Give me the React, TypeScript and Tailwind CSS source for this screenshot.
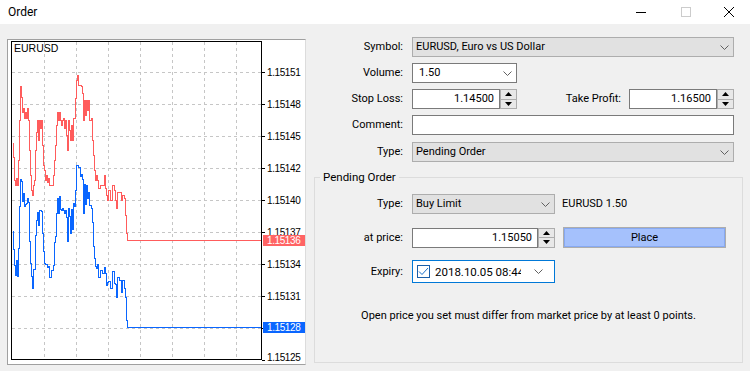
import React from 'react';

const RED: [number, number][] = [
  [12, 143], [13, 157], [14, 180], [15, 185], [16, 178], [17, 185], [18, 160], [19, 120], [20, 86], [21, 97],
  [22, 112], [23, 108], [24, 118], [25, 112], [26, 118], [27, 108], [28, 120], [29, 150], [30, 175], [31, 190],
  [32, 195], [33, 185], [34, 180], [35, 150], [36, 132], [37, 120], [38, 140], [39, 120], [40, 128], [41, 120],
  [42, 145], [43, 165], [44, 170], [45, 180], [46, 175], [47, 182], [48, 178], [49, 185], [51, 185], [53, 175],
  [54, 160], [55, 145], [56, 125], [57, 112], [58, 120], [59, 112], [60, 120], [61, 125], [62, 120], [63, 118],
  [64, 128], [65, 120], [66, 135], [67, 150], [68, 120], [69, 130], [70, 140], [71, 125], [72, 140], [73, 118],
  [74, 118], [75, 98], [76, 80], [77, 75], [78, 85], [80, 85], [81, 86], [82, 93], [83, 120], [84, 100],
  [85, 115], [86, 100], [87, 110], [88, 100], [89, 120], [91, 118], [92, 140], [93, 155], [94, 170], [95, 180],
  [96, 175], [97, 180], [98, 188], [100, 185], [102, 185], [104, 175], [105, 188], [106, 195], [107, 200], [108, 190],
  [110, 200], [112, 185], [114, 190], [115, 200], [116, 208], [117, 192], [119, 192], [121, 200], [122, 195], [124, 198],
  [125, 215], [126, 233], [127, 240], [262, 240],
];

const JITTER = [0, 4, -3, 2, -6, 3, 0, -2, 5, -4, 1, -3];
const BLUE: [number, number][] = RED.map(([x, y], i) =>
  i >= RED.length - 3 ? [x, y + 87] : [x, y + 88 + JITTER[i % JITTER.length]]
);

function stepPath(pts: [number, number][]) {
  let d = `M${pts[0][0] + 0.5} ${pts[0][1] + 0.5}`;
  for (let i = 1; i < pts.length; i++) d += ` H${pts[i][0] + 0.5} V${pts[i][1] + 0.5}`;
  return d;
}

const GRID_X = [44, 76, 108, 140, 172, 204, 236];
const LEVELS = ['1.15151', '1.15148', '1.15145', '1.15142', '1.15140', '1.15137', '1.15134', '1.15131', '1.15128'];

function Chart() {
  return (
    <svg viewBox="8 40 297 324" width={297} height={324} shapeRendering="crispEdges">
      <rect x={8} y={40} width={297} height={324} fill="#fff" />
      <defs>
        <clipPath id="plot">
          <rect x={12} y={42} width={250} height={318} />
        </clipPath>
      </defs>
      {GRID_X.map(x => (
        <line key={x} x1={x + 0.5} x2={x + 0.5} y1={42} y2={360} stroke="#c6c6c6" strokeDasharray="3 3" />
      ))}
      {LEVELS.map((_, k) => (
        <line key={k} x1={12} x2={261} y1={72.5 + 32 * k} y2={72.5 + 32 * k} stroke="#c6c6c6" strokeDasharray="3 3" />
      ))}
      <g clipPath="url(#plot)" fill="none">
        <path d={stepPath(RED)} stroke="#ff5c5c" />
        <path d={stepPath(BLUE)} stroke="#0a66ff" />
      </g>
      <rect x={11.5} y={41.5} width={250} height={318} fill="none" stroke="#000" />
      {LEVELS.map((l, k) => (
        <g key={l}>
          <line x1={262} x2={265} y1={72.5 + 32 * k} y2={72.5 + 32 * k} stroke="#000" />
          <text x={267} y={76 + 32 * k} fontSize={10} letterSpacing={-0.4} fontFamily="'Liberation Sans', Arial, sans-serif" fill="#000" shapeRendering="auto">{l}</text>
        </g>
      ))}
      <line x1={262} x2={265} y1={360.5} y2={360.5} stroke="#000" />
      <text x={267} y={361} fontSize={10} letterSpacing={-0.4} fontFamily="'Liberation Sans', Arial, sans-serif" fill="#000" shapeRendering="auto">1.15125</text>
      <rect x={263} y={235} width={42} height={11} fill="#ff6464" />
      <text x={267} y={244} fontSize={10} letterSpacing={-0.4} fontFamily="'Liberation Sans', Arial, sans-serif" fill="#fff" shapeRendering="auto">1.15136</text>
      <rect x={263} y={322} width={42} height={11} fill="#0a66ff" />
      <text x={267} y={331} fontSize={10} letterSpacing={-0.4} fontFamily="'Liberation Sans', Arial, sans-serif" fill="#fff" shapeRendering="auto">1.15128</text>
      <text x={14} y={52} fontSize={10.5} fontFamily="'Liberation Sans', Arial, sans-serif" fill="#000" shapeRendering="auto">EURUSD</text>
    </svg>
  );
}

function Chevron() {
  return (
    <svg width="9" height="5" viewBox="0 0 9 5" className="shrink-0">
      <path d="M0.5 0.5 L4.5 4.5 L8.5 0.5" fill="none" stroke="#606060" />
    </svg>
  );
}

function Combo({ value, w, white }: { value: string; w: string; white?: boolean }) {
  return (
    <div
      className={`${w} h-[20px] border flex items-center justify-between pr-[4px] ${
        white ? 'bg-white border-[#7a7a7a] pl-[6px]' : 'bg-[#e1e1e1] border-[#adadad] pl-[3px]'
      }`}
    >
      <span className="whitespace-nowrap">{value}</span>
      <Chevron />
    </div>
  );
}

function Spinner() {
  return (
    <div className="w-[17px] h-[20px] border border-[#adadad] bg-[#e8e8e8] flex flex-col">
      <div className="flex-1 flex items-center justify-center border-b border-[#adadad]">
        <svg width="7" height="4" viewBox="0 0 7 4"><path d="M0 4 L3.5 0 L7 4 Z" fill="#000" /></svg>
      </div>
      <div className="flex-1 flex items-center justify-center">
        <svg width="7" height="4" viewBox="0 0 7 4"><path d="M0 0 L3.5 4 L7 0 Z" fill="#000" /></svg>
      </div>
    </div>
  );
}

function SpinInput({ value, w }: { value: string; w: string }) {
  return (
    <div className="flex h-[20px]">
      <div className={`${w} h-[20px] bg-white border border-[#7a7a7a] flex items-center justify-end pr-[5px] tabular-nums`}>{value}</div>
      <Spinner />
    </div>
  );
}

function Row({ label, lw, children, className = '' }: { label: string; lw: string; children: React.ReactNode; className?: string }) {
  return (
    <div className={`flex items-center ${className}`}>
      <div className={`${lw} text-right pr-[9px] shrink-0`}>{label}</div>
      {children}
    </div>
  );
}

export default function App() {
  return (
    <div className="w-[750px] h-[371px] bg-[#f0f0f0] text-[11px] leading-[14px] text-black font-['Roboto','Liberation_Sans',sans-serif] overflow-hidden">
      {/* Title bar */}
      <div className="h-[24px] bg-white flex items-center">
        <span className="pl-[8px] text-[12px]">Order</span>
        <div className="ml-auto flex h-full">
          <div className="w-[46px] flex items-center justify-center">
            <svg width="10" height="1"><rect width="10" height="1" fill="#000" /></svg>
          </div>
          <div className="w-[44px] flex items-center justify-center">
            <svg width="10" height="10"><rect x="0.5" y="0.5" width="9" height="9" fill="none" stroke="#cccccc" /></svg>
          </div>
          <div className="w-[42px] flex items-center justify-center">
            <svg width="10" height="10"><path d="M0 0 L10 10 M10 0 L0 10" stroke="#000" strokeWidth="1" /></svg>
          </div>
        </div>
      </div>

      <div className="flex">
        {/* Chart panel */}
        <div className="ml-[7px] mt-[15px] w-[299px] h-[326px] border border-t-[#a0a0a0] border-l-[#a0a0a0] border-r-[#dcdcdc] border-b-[#a0a0a0] bg-white">
          <Chart />
        </div>

        {/* Form */}
        <div className="ml-[4px] w-[440px] flex flex-col">
          <Row label="Symbol:" lw="w-[102px]" className="mt-[13px]">
            <Combo value="EURUSD, Euro vs US Dollar" w="w-[322px]" />
          </Row>
          <Row label="Volume:" lw="w-[102px]" className="mt-[6px]">
            <Combo value="1.50" w="w-[105px]" white />
          </Row>
          <Row label="Stop Loss:" lw="w-[102px]" className="mt-[6px]">
            <SpinInput value="1.14500" w="w-[88px]" />
            <div className="w-[112px] text-right pr-[8px]">Take Profit:</div>
            <SpinInput value="1.16500" w="w-[88px]" />
          </Row>
          <Row label="Comment:" lw="w-[102px]" className="mt-[6px]">
            <div className="w-[322px] h-[20px] bg-white border border-[#7a7a7a]" />
          </Row>
          <Row label="Type:" lw="w-[102px]" className="mt-[7px]">
            <Combo value="Pending Order" w="w-[322px]" />
          </Row>

          <fieldset className="mt-[8px] ml-[4px] w-[429px] h-[193px] border border-[#dcdcdc]">
            <legend className="ml-[5px] px-[3px] leading-[14px] text-[11.5px]">Pending Order</legend>
            <Row label="Type:" lw="w-[97px]" className="mt-[10px]">
              <Combo value="Buy Limit" w="w-[143px]" />
              <span className="ml-[7px]">EURUSD 1.50</span>
            </Row>
            <Row label="at price:" lw="w-[97px]" className="mt-[13px]">
              <SpinInput value="1.15050" w="w-[126px]" />
              <div className="ml-[8px] w-[163px] h-[21px] border border-[#adadad] bg-[#a5c1fc] shadow-[inset_0_0_0_1px_#87a9f2] flex items-center justify-center">
                Place
              </div>
            </Row>
            <Row label="Expiry:" lw="w-[97px]" className="mt-[12px]">
              <div className="w-[143px] h-[23px] bg-white border border-[#0078d7] flex items-center">
                <div className="ml-[4px] w-[13px] h-[13px] border border-[#1a5ea8] flex items-center justify-center shrink-0">
                  <svg width="11" height="9" viewBox="0 0 11 9"><path d="M1 4.5 L4 7.5 L10 1" fill="none" stroke="#1a6fc9" strokeWidth="1" /></svg>
                </div>
                <div className="ml-[5px] w-[86px] overflow-hidden whitespace-nowrap tabular-nums text-[11.5px]">2018.10.05 08:44</div>
                <div className="ml-[13px]"><Chevron /></div>
              </div>
            </Row>
            <div className="mt-[26px] text-center">Open price you set must differ from market price by at least 0 points.</div>
          </fieldset>
        </div>
      </div>
    </div>
  );
}
